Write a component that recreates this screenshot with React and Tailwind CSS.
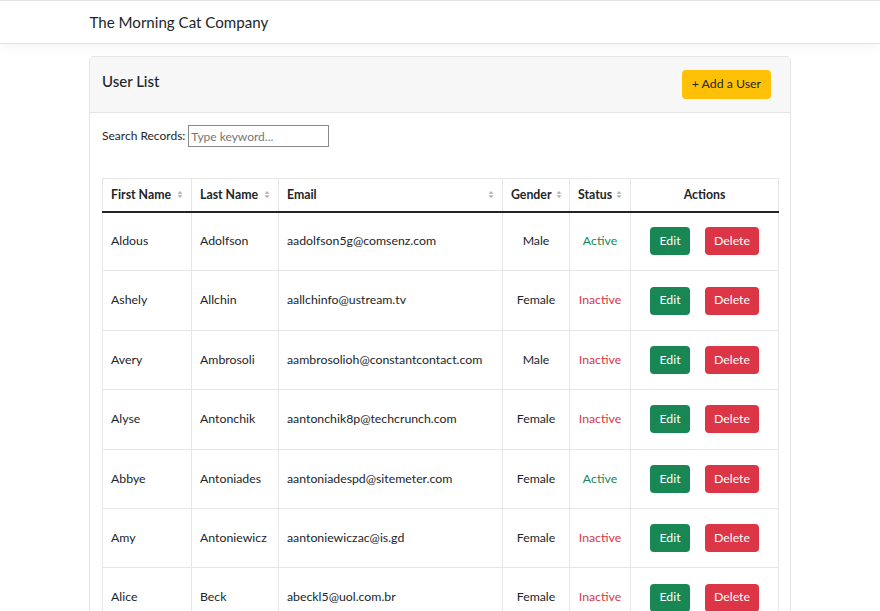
import { useState } from 'react'

const users = [
  { first: 'Aldous', last: 'Adolfson', email: 'aadolfson5g@comsenz.com', gender: 'Male', active: true },
  { first: 'Ashely', last: 'Allchin', email: 'aallchinfo@ustream.tv', gender: 'Female', active: false },
  { first: 'Avery', last: 'Ambrosoli', email: 'aambrosolioh@constantcontact.com', gender: 'Male', active: false },
  { first: 'Alyse', last: 'Antonchik', email: 'aantonchik8p@techcrunch.com', gender: 'Female', active: false },
  { first: 'Abbye', last: 'Antoniades', email: 'aantoniadespd@sitemeter.com', gender: 'Female', active: true },
  { first: 'Amy', last: 'Antoniewicz', email: 'aantoniewiczac@is.gd', gender: 'Female', active: false },
  { first: 'Alice', last: 'Beck', email: 'abeckl5@uol.com.br', gender: 'Female', active: false },
]

function SortIcon() {
  return (
    <svg width="6" height="9" viewBox="0 0 6 9" className="shrink-0">
      <path d="M3 1 L5.5 3.8 L0.5 3.8 Z" fill="#b0b0b0" />
      <path d="M3 8 L5.5 5.2 L0.5 5.2 Z" fill="#b0b0b0" />
    </svg>
  )
}

function HeaderCell({ label, className = '' }) {
  return (
    <th className={`border-r border-[#e6e6e6] px-2 py-0 font-bold whitespace-nowrap ${className}`}>
      <div className="flex items-center justify-between gap-1">
        <span>{label}</span>
        <SortIcon />
      </div>
    </th>
  )
}

function App() {
  const [keyword, setKeyword] = useState('')

  return (
    <div className="min-h-screen bg-white text-[12.3px] text-[#212529] font-['Segoe_UI','Lato',sans-serif]">
      <nav className="h-[44px] border-t border-b border-[#e3e3e3] bg-white shadow-[0_4px_10px_rgba(0,0,0,0.04)]">
        <div className="mx-auto flex h-full w-[701px] items-center">
          <span className="text-[15.1px] text-[#212529]">The Morning Cat Company</span>
        </div>
      </nav>

      <div className="mx-auto mt-[12px] w-[702px] rounded border border-[#e5e5e5]">
        <div className="flex h-[56px] items-center justify-between border-b border-[#e5e5e5] bg-[#f7f7f7] pl-[12px] pr-[19px]">
          <h5 className="-mt-[6px] text-[15px] font-medium">User List</h5>
          <button className="h-[29px] rounded bg-[#ffc107] px-[10px] text-[12.3px] text-[#212529]">+ Add a User</button>
        </div>

        <div className="px-[12px] pt-[12px]">
          <div className="flex items-center">
            <span className="text-[12px]">Search Records:</span>
            <input
              className="ml-[3px] h-[22px] w-[141px] border border-[#8a8a8a] px-[2px] text-[12px] outline-none placeholder:text-[#757575]"
              placeholder="Type keyword..."
              value={keyword}
              onChange={e => setKeyword(e.target.value)}
            />
          </div>

          <table className="mt-[31px] w-[677px] table-fixed border-collapse border border-[#e6e6e6] text-left">
            <thead>
              <tr className="h-[33px] border-b-2 border-[#212529]">
                <HeaderCell label="First Name" className="w-[89px]" />
                <HeaderCell label="Last Name" className="w-[87px]" />
                <HeaderCell label="Email" className="w-[224px]" />
                <HeaderCell label="Gender" className="w-[67px]" />
                <HeaderCell label="Status" className="w-[61px]" />
                <th className="px-2 text-center font-bold">Actions</th>
              </tr>
            </thead>
            <tbody>
              {users
                .filter(u => (u.first + u.last + u.email).toLowerCase().includes(keyword.toLowerCase()))
                .map(u => (
                  <tr key={u.email} className="h-[59.4px] border-b border-[#e6e6e6] whitespace-nowrap">
                    <td className="border-r border-[#e6e6e6] px-2">{u.first}</td>
                    <td className="border-r border-[#e6e6e6] px-2">{u.last}</td>
                    <td className="border-r border-[#e6e6e6] px-2">{u.email}</td>
                    <td className="border-r border-[#e6e6e6] px-2 text-center">{u.gender}</td>
                    <td className={`border-r border-[#e6e6e6] px-2 text-center ${u.active ? 'text-[#198754]' : 'text-[#dc3545]'}`}>
                      {u.active ? 'Active' : 'Inactive'}
                    </td>
                    <td className="px-2">
                      <div className="flex items-center justify-center gap-[15px]">
                        <button className="h-[28px] w-[40px] rounded bg-[#198754] text-white">Edit</button>
                        <button className="h-[28px] w-[54px] rounded bg-[#dc3545] text-white">Delete</button>
                      </div>
                    </td>
                  </tr>
                ))}
            </tbody>
          </table>
        </div>
      </div>
    </div>
  )
}

export default App
